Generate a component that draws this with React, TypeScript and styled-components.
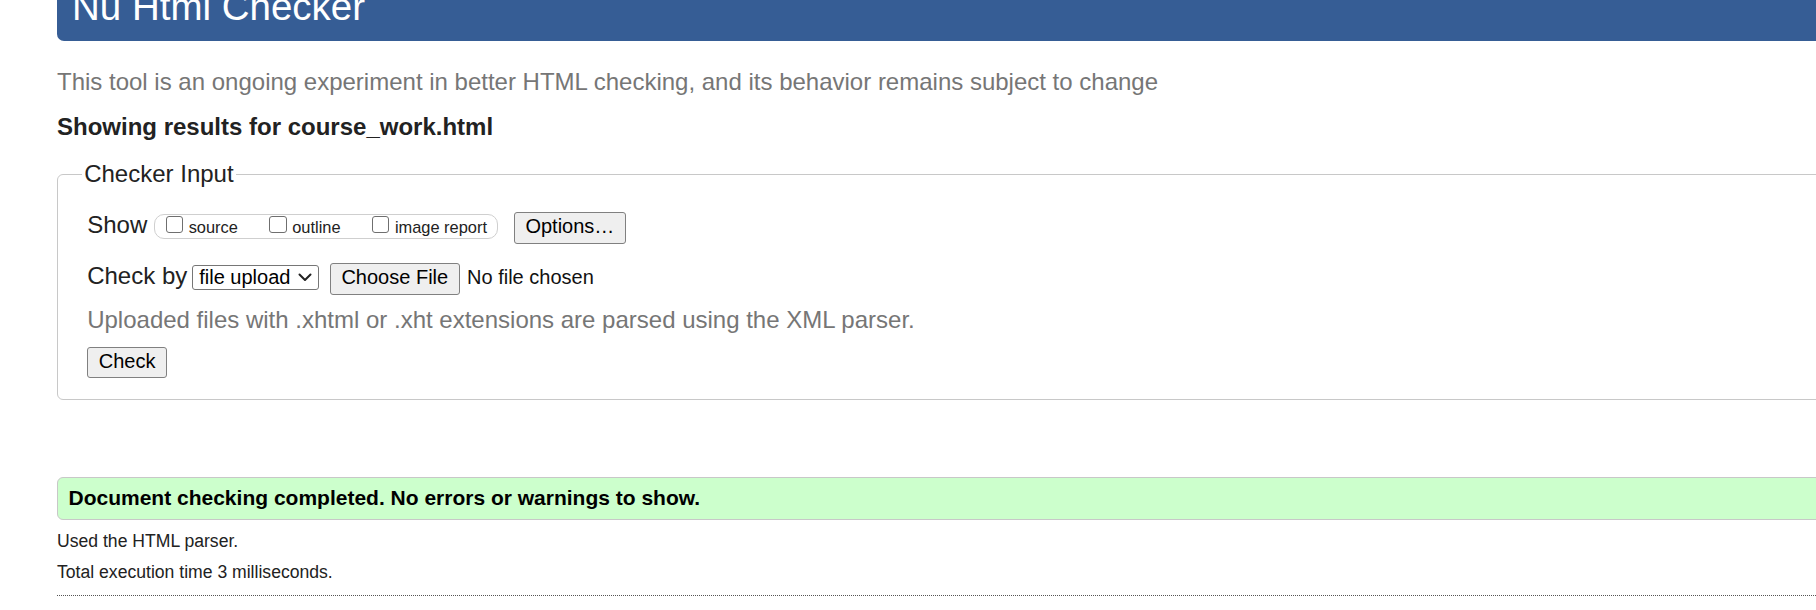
import styled, { createGlobalStyle } from "styled-components";

const GlobalStyle = createGlobalStyle`
  html, body {
    margin: 0;
    padding: 0;
    overflow: hidden;
    background: #fff;
  }
  body {
    font-family: "Liberation Sans", Arial, Helvetica, sans-serif;
    color: #222;
  }
`;

const Page = styled.div`
  width: 1900px;
  box-sizing: border-box;
  padding-left: 57px;
`;

const Banner = styled.h1`
  margin: -13px 0 0;
  padding: 0 0 15px 15px;
  background: #365d95;
  color: #fff;
  font-size: 38.5px;
  font-weight: normal;
  line-height: 39px;
  border-radius: 0 0 7px 7px;
`;

const Intro = styled.p<{ $top: number }>`
  margin: ${(p) => p.$top}px 0 0;
  font-size: 24px;
  line-height: 28px;
  color: #767676;
`;

const Heading = styled.h2`
  margin: 17px 0 0;
  font-size: 24px;
  font-weight: bold;
  line-height: 28px;
  color: #222;
`;

const Fieldset = styled.fieldset`
  margin: 19.7px 0 0;
  min-width: 0;
  border: 1px solid #c8c8c8;
  border-radius: 6px;
  padding: 23.9px 0 21px 29.2px;
`;

const Legend = styled.legend`
  margin-left: -5px;
  padding: 0 2px;
  font-size: 24px;
  line-height: 28px;
  color: #222;
`;

const Row = styled.div<{ $top?: number }>`
  display: flex;
  align-items: baseline;
  margin-top: ${(p) => p.$top ?? 0}px;
`;

const Label = styled.span`
  font-size: 24px;
  line-height: 23px;
  color: #222;
`;

const ShowGroup = styled.span`
  display: inline-flex;
  align-items: baseline;
  margin-left: 7px;
  border: 1px solid #cfcfcf;
  border-radius: 10px;
  padding: 1px 10px 2px 10.5px;
`;

const Option = styled.label<{ $first?: boolean }>`
  display: inline-flex;
  align-items: baseline;
  margin-left: ${(p) => (p.$first ? 0 : 31.5)}px;
  font-size: 16.4px;
  line-height: 18px;
  color: #222;
`;

const Box = styled.span`
  display: inline-block;
  box-sizing: border-box;
  width: 17.4px;
  height: 17.4px;
  border: 1.5px solid #6f6f6f;
  border-radius: 3px;
  background: #fff;
  margin-right: 5.5px;
`;

const Button = styled.button<{ $left?: number }>`
  margin: 0 0 0 ${(p) => p.$left ?? 0}px;
  font-family: "Liberation Sans", Arial, sans-serif;
  font-size: 20px;
  line-height: 23px;
  color: #000;
  background: #efefef;
  border: 1px solid #808080;
  border-radius: 3px;
  padding: 2px 10.5px 4.5px;
`;

const Select = styled.div`
  display: inline-flex;
  align-items: baseline;
  margin-left: 5px;
  border: 1px solid #767676;
  border-radius: 3px;
  padding: 0 6px;
  font-size: 20px;
  line-height: 23px;
  color: #000;

  svg {
    align-self: center;
    margin-left: 8px;
  }
`;

const FileName = styled.span`
  margin-left: 7.4px;
  font-size: 20px;
  line-height: 23px;
  color: #111;
`;

const Success = styled.div`
  margin-top: 76.5px;
  background: #ccffcc;
  border: 1px solid #c8c8c8;
  border-radius: 6px;
  padding: 8.4px 10.5px 8.9px;
  font-size: 21px;
  font-weight: bold;
  line-height: 24px;
  color: #000;
`;

const Detail = styled.p<{ $top: number }>`
  margin: ${(p) => p.$top}px 0 0;
  font-size: 17.6px;
  line-height: 20px;
  color: #222;
`;

const Rule = styled.hr`
  margin: 12.8px 0 0;
  border: 0;
  border-top: 1px dotted #555;
`;

const Chevron = () => (
  <svg width="14" height="9" viewBox="0 0 14 9" fill="none">
    <polyline
      points="1.5,1.5 7,7 12.5,1.5"
      stroke="#222"
      strokeWidth="2"
      strokeLinecap="round"
      strokeLinejoin="round"
    />
  </svg>
);

const options = ["source", "outline", "image report"];

export default function App() {
  return (
    <Page>
      <GlobalStyle />
      <Banner>Nu Html Checker</Banner>
      <Intro $top={26.7}>
        This tool is an ongoing experiment in better HTML checking, and its behavior remains subject to change
      </Intro>
      <Heading>Showing results for course_work.html</Heading>

      <Fieldset>
        <Legend>Checker Input</Legend>
        <Row>
          <Label>Show</Label>
          <ShowGroup>
            {options.map((name, i) => (
              <Option key={name} $first={i === 0}>
                <Box />
                {name}
              </Option>
            ))}
          </ShowGroup>
          <Button $left={16}>Options…</Button>
        </Row>
        <Row $top={19.3}>
          <Label>Check by</Label>
          <Select>
            file upload
            <Chevron />
          </Select>
          <Button $left={10.5}>Choose File</Button>
          <FileName>No file chosen</FileName>
        </Row>
        <Intro $top={11.1}>
          Uploaded files with .xhtml or .xht extensions are parsed using the XML parser.
        </Intro>
        <Row $top={13.3}>
          <Button>Check</Button>
        </Row>
      </Fieldset>

      <Success>Document checking completed. No errors or warnings to show.</Success>
      <Detail $top={11.1}>Used the HTML parser.</Detail>
      <Detail $top={10.7}>Total execution time 3 milliseconds.</Detail>
      <Rule />
    </Page>
  );
}
